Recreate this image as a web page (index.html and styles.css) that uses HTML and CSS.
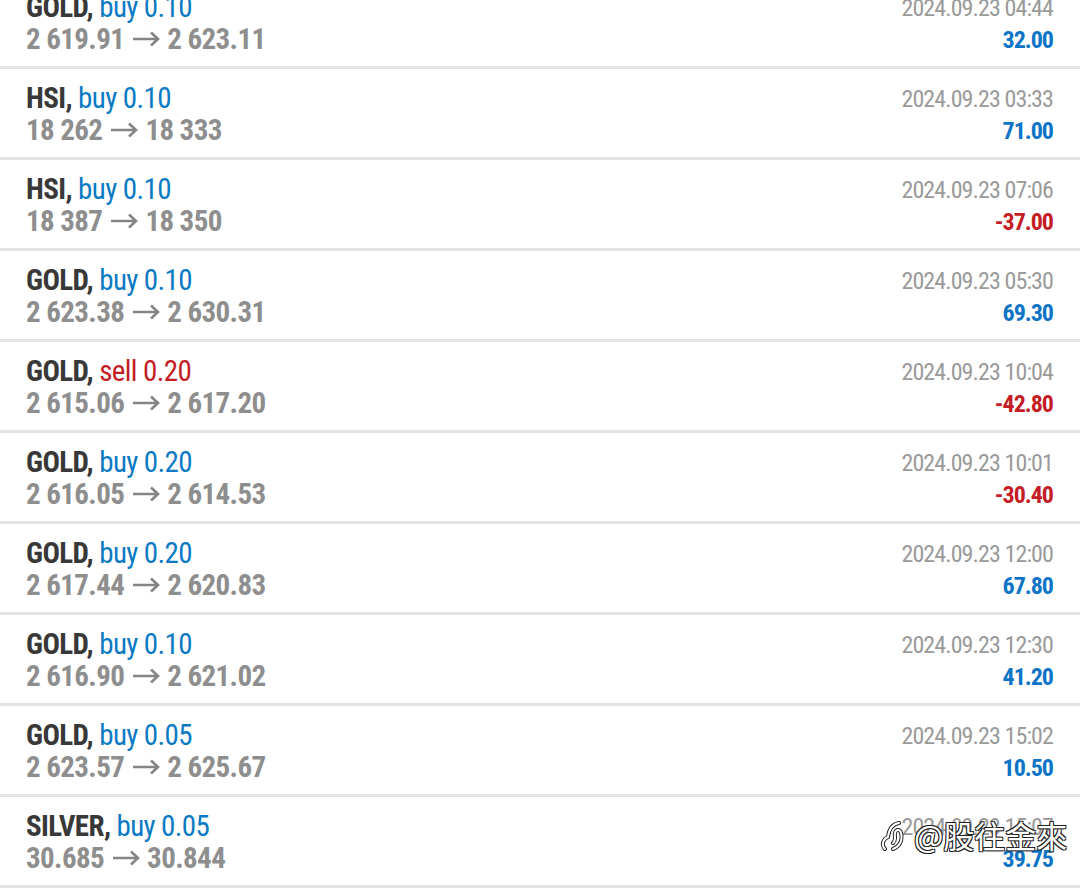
FILE: index.html
```html
<!DOCTYPE html>
<html>
<head>
<meta charset="utf-8">
<link rel="stylesheet" href="styles.css">
</head>
<body>
<div class="list">
  <div class="row"><div class="left"><div class="title"><span class="sym">GOLD,</span> <span class="buy">buy 0.10</span></div><div class="prices">2 619.91<svg class="arr" viewBox="0 0 28 16"><path d="M1 8H26M19 1.5L26 8L19 14.5" fill="none" stroke="currentColor" stroke-width="2.6"/></svg>2 623.11</div></div><div class="right"><div class="date">2024.09.23 04:44</div><div class="profit pos">32.00</div></div></div>
  <div class="row"><div class="left"><div class="title"><span class="sym">HSI,</span> <span class="buy">buy 0.10</span></div><div class="prices">18 262<svg class="arr" viewBox="0 0 28 16"><path d="M1 8H26M19 1.5L26 8L19 14.5" fill="none" stroke="currentColor" stroke-width="2.6"/></svg>18 333</div></div><div class="right"><div class="date">2024.09.23 03:33</div><div class="profit pos">71.00</div></div></div>
  <div class="row"><div class="left"><div class="title"><span class="sym">HSI,</span> <span class="buy">buy 0.10</span></div><div class="prices">18 387<svg class="arr" viewBox="0 0 28 16"><path d="M1 8H26M19 1.5L26 8L19 14.5" fill="none" stroke="currentColor" stroke-width="2.6"/></svg>18 350</div></div><div class="right"><div class="date">2024.09.23 07:06</div><div class="profit neg">-37.00</div></div></div>
  <div class="row"><div class="left"><div class="title"><span class="sym">GOLD,</span> <span class="buy">buy 0.10</span></div><div class="prices">2 623.38<svg class="arr" viewBox="0 0 28 16"><path d="M1 8H26M19 1.5L26 8L19 14.5" fill="none" stroke="currentColor" stroke-width="2.6"/></svg>2 630.31</div></div><div class="right"><div class="date">2024.09.23 05:30</div><div class="profit pos">69.30</div></div></div>
  <div class="row"><div class="left"><div class="title"><span class="sym">GOLD,</span> <span class="sell">sell 0.20</span></div><div class="prices">2 615.06<svg class="arr" viewBox="0 0 28 16"><path d="M1 8H26M19 1.5L26 8L19 14.5" fill="none" stroke="currentColor" stroke-width="2.6"/></svg>2 617.20</div></div><div class="right"><div class="date">2024.09.23 10:04</div><div class="profit neg">-42.80</div></div></div>
  <div class="row"><div class="left"><div class="title"><span class="sym">GOLD,</span> <span class="buy">buy 0.20</span></div><div class="prices">2 616.05<svg class="arr" viewBox="0 0 28 16"><path d="M1 8H26M19 1.5L26 8L19 14.5" fill="none" stroke="currentColor" stroke-width="2.6"/></svg>2 614.53</div></div><div class="right"><div class="date">2024.09.23 10:01</div><div class="profit neg">-30.40</div></div></div>
  <div class="row"><div class="left"><div class="title"><span class="sym">GOLD,</span> <span class="buy">buy 0.20</span></div><div class="prices">2 617.44<svg class="arr" viewBox="0 0 28 16"><path d="M1 8H26M19 1.5L26 8L19 14.5" fill="none" stroke="currentColor" stroke-width="2.6"/></svg>2 620.83</div></div><div class="right"><div class="date">2024.09.23 12:00</div><div class="profit pos">67.80</div></div></div>
  <div class="row"><div class="left"><div class="title"><span class="sym">GOLD,</span> <span class="buy">buy 0.10</span></div><div class="prices">2 616.90<svg class="arr" viewBox="0 0 28 16"><path d="M1 8H26M19 1.5L26 8L19 14.5" fill="none" stroke="currentColor" stroke-width="2.6"/></svg>2 621.02</div></div><div class="right"><div class="date">2024.09.23 12:30</div><div class="profit pos">41.20</div></div></div>
  <div class="row"><div class="left"><div class="title"><span class="sym">GOLD,</span> <span class="buy">buy 0.05</span></div><div class="prices">2 623.57<svg class="arr" viewBox="0 0 28 16"><path d="M1 8H26M19 1.5L26 8L19 14.5" fill="none" stroke="currentColor" stroke-width="2.6"/></svg>2 625.67</div></div><div class="right"><div class="date">2024.09.23 15:02</div><div class="profit pos">10.50</div></div></div>
  <div class="row"><div class="left"><div class="title"><span class="sym">SILVER,</span> <span class="buy">buy 0.05</span></div><div class="prices">30.685<svg class="arr" viewBox="0 0 28 16"><path d="M1 8H26M19 1.5L26 8L19 14.5" fill="none" stroke="currentColor" stroke-width="2.6"/></svg>30.844</div></div><div class="right"><div class="date">2024.09.23 15:07</div><div class="profit pos">39.75</div></div></div>
</div>
<div class="watermark">
  <svg class="wm-logo" width="32" height="34" viewBox="0 0 32 34"><path d="M5 31 C1 27 3 21 8 19 C9 11 13 6 19 5 M13 31 C19 29 23 23 21 15 C20 11 16 11 15 15 C14 19 17 21 13 25" fill="none" stroke="#222" stroke-width="4" stroke-linecap="round"/><path d="M5 31 C1 27 3 21 8 19 C9 11 13 6 19 5 M13 31 C19 29 23 23 21 15 C20 11 16 11 15 15 C14 19 17 21 13 25" fill="none" stroke="#fff" stroke-width="2" stroke-linecap="round"/></svg>
  <span class="wm-text">@股往金來</span>
</div>
</body>
</html>
```

FILE: styles.css
```css
html, body {
  margin: 0;
  padding: 0;
  background: #ffffff;
}
body {
  width: 1080px;
  height: 888px;
  overflow: hidden;
  position: relative;
  font-family: "Roboto Condensed", "Roboto", sans-serif;
}
.list {
  margin-top: -22px;
}
.row {
  height: 88px;
  border-bottom: 3px solid #e3e3e3;
  display: flex;
  justify-content: space-between;
  padding: 0 27px 0 26px;
  box-sizing: content-box;
}
.left {
  padding-top: 13px;
}
.title {
  font-size: 29px;
  line-height: 32px;
  letter-spacing: -0.6px;
  white-space: nowrap;
}
.sym {
  color: #383838;
  font-weight: bold;
}
.buy { color: #0b7ac4; }
.sell { color: #c41d25; }
.prices {
  font-size: 29px;
  line-height: 32px;
  color: #8e8e8e;
  font-weight: bold;
  letter-spacing: -0.6px;
  white-space: nowrap;
}
.arr {
  display: inline-block;
  width: 28px;
  height: 16px;
  margin: 0 7px 0 8px;
  color: #858585;
  vertical-align: 2px;
}
.right {
  padding-top: 14px;
  text-align: right;
}
.date {
  font-size: 24px;
  line-height: 32px;
  letter-spacing: -0.9px;
  color: #9a9a9a;
}
.profit {
  font-size: 24px;
  line-height: 32px;
  letter-spacing: -1px;
  font-weight: bold;
}
.pos { color: #0e74c6; }
.neg { color: #c41d25; }
.watermark {
  position: absolute;
  left: 880px;
  top: 815px;
  display: flex;
  align-items: center;
  gap: 2px;
  white-space: nowrap;
}
.wm-text {
  font-family: "Noto Sans CJK TC", "Noto Sans CJK SC", sans-serif;
  font-size: 31px;
  line-height: 40px;
  color: #ffffff;
  text-shadow: -1px -1px 0 #222, 1px -1px 0 #222, -1px 1px 0 #222, 1px 1px 0 #222;
}
```
